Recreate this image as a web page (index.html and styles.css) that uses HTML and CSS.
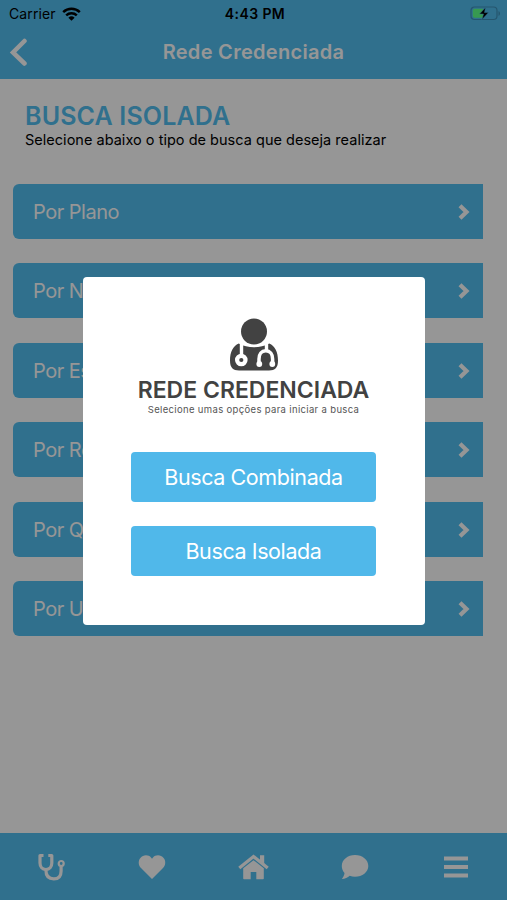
FILE: index.html
```html
<!DOCTYPE html>
<html lang="pt-BR">
<head>
  <meta charset="UTF-8">
  <meta name="viewport" content="width=device-width, initial-scale=1.0">
  <title>Rede Credenciada</title>
  <link rel="stylesheet" href="styles.css">
</head>
<body>

  <svg class="symbols" width="0" height="0">
    <symbol id="chevron" viewBox="0 0 12 16">
      <path d="M2 1.700L8.500 8 2 14.300" fill="none" stroke="currentColor" stroke-width="4.200"/>
    </symbol>
  </svg>

  <header class="header">
    <div class="status-bar">
      <div class="carrier">
        <span>Carrier</span>
        <svg width="19" height="14" viewBox="0 0 19 14">
          <path d="M1.2 5.2a12 12 0 0 1 16.6 0M4.2 8.3a7.7 7.7 0 0 1 10.6 0" fill="none" stroke="#000" stroke-width="2.5"/>
          <path d="M9.5 13.8L6.4 10.7a4.5 4.5 0 0 1 6.2 0z"/>
        </svg>
      </div>
      <span class="clock">4:43 PM</span>
      <svg class="battery" width="31" height="15" viewBox="0 0 31 15">
        <rect x="1" y="1" width="26" height="12.5" rx="3.5" fill="none" stroke="#3f90b7" stroke-width="1.200"/>
        <path d="M28.500 5v5c2-.8 2-4.200 0-5z" fill="#3f90b7"/>
        <path d="M4.500 2.700H13v9.100H4.500a1.700 1.700 0 0 1-1.700-1.700V4.400a1.700 1.700 0 0 1 1.700-1.700z" fill="#5cff86"/>
        <path d="M15.500 1.500L9.500 8h4l-1.500 5.500L18.500 6.600h-4z" fill="#000" stroke="#50bbec" stroke-width=".5"/>
      </svg>
    </div>
    <div class="nav-bar">
      <svg class="back" width="20" height="28" viewBox="0 0 20 28">
        <path d="M15.500 3L4 14.500l11.500 11" fill="none" stroke="currentColor" stroke-width="4.500" stroke-linecap="round"/>
      </svg>
      <h1>Rede Credenciada</h1>
    </div>
  </header>

  <main class="content">
    <h2>BUSCA ISOLADA</h2>
    <p class="subtitle">Selecione abaixo o tipo de busca que deseja realizar</p>

    <div class="list">
      <div class="item"><span>Por Plano</span><svg width="12" height="16"><use href="#chevron"/></svg></div>
      <div class="item"><span>Por Nome</span><svg width="12" height="16"><use href="#chevron"/></svg></div>
      <div class="item"><span>Por Especialidade</span><svg width="12" height="16"><use href="#chevron"/></svg></div>
      <div class="item"><span>Por Região</span><svg width="12" height="16"><use href="#chevron"/></svg></div>
      <div class="item"><span>Por Qualificação</span><svg width="12" height="16"><use href="#chevron"/></svg></div>
      <div class="item"><span>Por Urgência</span><svg width="12" height="16"><use href="#chevron"/></svg></div>
    </div>
  </main>

  <nav class="tab-bar">
    <div class="tab">
      <svg width="30" height="30" viewBox="0 0 30 30">
        <g fill="none" stroke="currentColor" stroke-width="3.200">
          <path d="M7.500 3.500H4V11c0 3.800 2.400 6.500 5.900 6.500s5.900-2.700 5.900-6.500V3.500h-3.500" stroke-linejoin="round"/>
          <path d="M9.900 18c0 6.200 3.300 8.900 7.900 8.900 4.800 0 7.300-3 7.300-8V14"/>
        </g>
        <circle cx="25.200" cy="11.500" r="2.500" fill="none" stroke="currentColor" stroke-width="2.200"/>
      </svg>
    </div>
    <div class="tab">
      <svg width="28" height="26" viewBox="0 0 28 26">
        <path d="M14 25L3 14C.2 11.200 0 6.700 2.400 3.900 5.300.5 10.500.5 13.200 3.700l.8 1 .8-1c2.700-3.200 7.900-3.200 10.800.2C28 6.700 27.800 11.200 25 14z" fill="currentColor"/>
      </svg>
    </div>
    <div class="tab">
      <svg width="31" height="26" viewBox="0 0 31 26">
        <path d="M1.300 14L15.500 2.500 29.700 14" fill="none" stroke="currentColor" stroke-width="3.300"/>
        <path d="M22 1.200h4.200v9.300L22 7.100z" fill="currentColor"/>
        <path d="M5.200 14.300L15.500 6.200l10.300 8.100v10.200a.8.8 0 0 1-.8.800h-6.700v-7.300h-5.600v7.300H6a.8.8 0 0 1-.8-.8z" fill="currentColor"/>
      </svg>
    </div>
    <div class="tab">
      <svg width="28" height="26" viewBox="0 0 28 26">
        <path d="M14 1c7.400 0 13.300 4.800 13.300 10.900S21.400 22.700 14 22.700c-1.900 0-3.700-.3-5.300-.9C6.800 23.500 3.900 25 .8 25c1.300-1.400 2.500-3.700 2.700-5.900C1.800 17.100.8 14.600.8 11.900.8 5.800 6.700 1 14 1z" fill="currentColor"/>
      </svg>
    </div>
    <div class="tab">
      <svg width="24" height="24" viewBox="0 0 24 24">
        <path d="M0 3.500h24M0 12h24M0 20.500h24" stroke="currentColor" stroke-width="4"/>
      </svg>
    </div>
  </nav>

  <div class="overlay">
    <div class="modal">
      <svg class="doctor" width="50" height="54" viewBox="0 0 50 54">
        <circle cx="25" cy="13.500" r="13" fill="#424242"/>
        <path d="M9.800 25.500C4 28 1 34 1 42.500c0 7.300 3 10 9 10h30c6 0 9-2.700 9-10 0-8.500-3-14.500-8.800-17C31.500 30.500 18.500 30.500 9.800 25.500z" fill="#424242"/>
        <g fill="none" stroke="#fff">
          <path d="M12.500 24v13M37.500 24v8" stroke-width="3.400"/>
          <circle cx="12.300" cy="42" r="4.200" stroke-width="4.200"/>
          <path d="M30 46.500V41c0-5 2.500-8.200 6.800-8.200s6.800 3.200 6.800 8.200v5.500" stroke-width="3.500"/>
        </g>
        <circle cx="30.300" cy="46" r="2.900" fill="#fff"/>
        <circle cx="43.300" cy="46" r="2.900" fill="#fff"/>
      </svg>
      <h3>REDE CREDENCIADA</h3>
      <p>Selecione umas opções para iniciar a busca</p>
      <button class="btn">Busca Combinada</button>
      <button class="btn">Busca Isolada</button>
    </div>
  </div>

</body>
</html>
```
FILE: styles.css
```css
* {
  box-sizing: border-box;
  margin: 0;
  padding: 0;
}

body {
  height: 100vh;
  display: flex;
  flex-direction: column;
  overflow: hidden;
  background-color: #fafafa;
  color: #000;
  font-family: Inter, "Liberation Sans", sans-serif;
}

svg {
  display: block;
  flex: none;
}

.symbols {
  position: absolute;
}

.header {
  height: 79px;
  background-color: #50bbec;
  color: #fafafa;
}

.status-bar {
  height: 27px;
  padding: 0 6px 0 9px;
  display: grid;
  grid-template-columns: 1fr auto 1fr;
  align-items: center;
  color: #000;
  font-size: 14px;
}

.carrier {
  display: flex;
  align-items: center;
  gap: 6px;
}

.carrier span {
  letter-spacing: 0.1px;
}

.clock {
  font-weight: 600;
  letter-spacing: 0.4px;
}

.battery {
  justify-self: end;
}

.nav-bar {
  height: 50px;
  padding: 0 9px;
  display: grid;
  grid-template-columns: 20px 1fr 20px;
  align-items: center;
}

.nav-bar h1 {
  text-align: center;
  font-size: 20px;
  font-weight: 600;
  letter-spacing: 0.3px;
}

.content {
  flex: 1;
  padding: 23px 24px 0 13px;
}

.content h2 {
  padding-left: 12px;
  line-height: 28px;
  font-size: 25px;
  font-weight: 600;
  letter-spacing: 0.15px;
  color: #50bbec;
}

.subtitle {
  padding-left: 12px;
  line-height: 20px;
  font-size: 14.5px;
  letter-spacing: 0.02px;
}

.list {
  margin-top: 34px;
  display: flex;
  flex-direction: column;
  gap: 24.4px;
}

.item {
  height: 55px;
  padding: 1px 13px 0 20px;
  display: flex;
  align-items: center;
  justify-content: space-between;
  background-color: #50bbec;
  border-radius: 6px 0 0 6px;
  color: #fafafa;
  font-size: 20px;
  letter-spacing: -0.5px;
}

.tab-bar {
  height: 67px;
  display: grid;
  grid-template-columns: repeat(5, 1fr);
  place-items: center;
  background-color: #50bbec;
  color: #fafafa;
}

.overlay {
  position: fixed;
  inset: 0;
  display: flex;
  justify-content: center;
  align-items: center;
  background-color: rgba(0, 0, 0, 0.4);
}

.modal {
  width: 342px;
  height: 348px;
  margin-top: 1px;
  padding: 41px 49px 0;
  display: flex;
  flex-direction: column;
  align-items: center;
  background-color: #fff;
  border-radius: 4px;
}

.modal h3 {
  margin-top: 4px;
  line-height: 28px;
  font-size: 23px;
  font-weight: 600;
  color: #424242;
  white-space: nowrap;
}

.modal p {
  margin-bottom: 36px;
  line-height: 12px;
  font-size: 9.5px;
  letter-spacing: 0.34px;
  color: #555;
  white-space: nowrap;
}

.btn {
  width: 245px;
  height: 50px;
  margin-bottom: 24px;
  flex: none;
  border: none;
  border-radius: 4px;
  background-color: #50b8ea;
  color: #fff;
  font-family: inherit;
  font-size: 21.5px;
  letter-spacing: -0.4px;
}
```
